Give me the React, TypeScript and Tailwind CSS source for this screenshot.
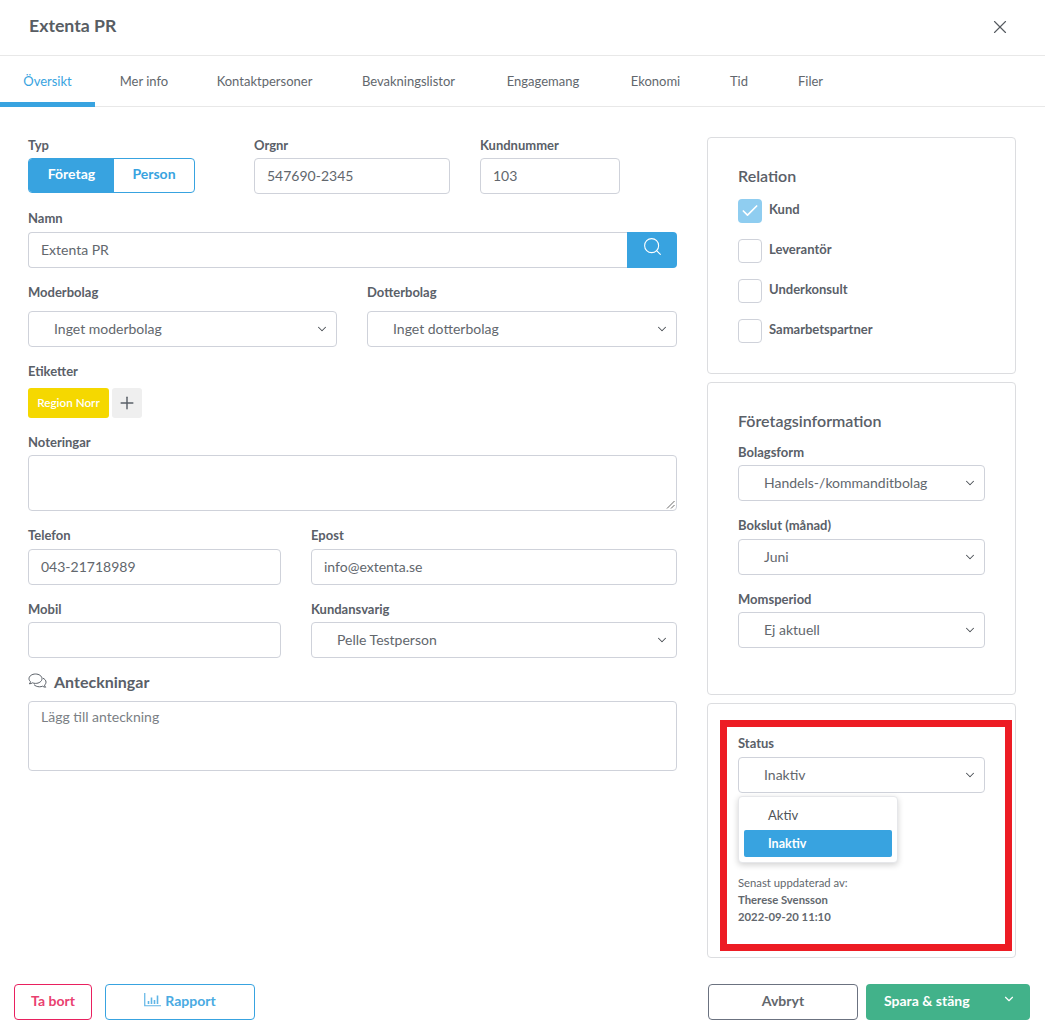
import React from "react";
import { X, Search, ChevronDown, Check, Plus } from "lucide-react";

const tabs = [
  ["Översikt", "w-[95px]"],
  ["Mer info", "w-[98px]"],
  ["Kontaktpersoner", "w-[143px]"],
  ["Bevakningslistor", "w-[145px]"],
  ["Engagemang", "w-[124px]"],
  ["Ekonomi", "w-[101px]"],
  ["Tid", "w-[66px]"],
  ["Filer", "w-[77px]"],
];

function Label({ children, className = "" }: { children: React.ReactNode; className?: string }) {
  return <div className={`text-[13px] leading-4 font-bold text-[#5a6068] ${className}`}>{children}</div>;
}

function Input({ value, className = "" }: { value?: string; className?: string }) {
  return (
    <div className={`h-[36px] border border-[#cfd2da] rounded-[4px] px-3 pb-[1px] flex items-center text-[14px] text-[#62676d] ${className}`}>
      {value}
    </div>
  );
}

function Select({ value, className = "" }: { value: string; className?: string }) {
  return (
    <div className={`h-[36px] border border-[#cfd2da] rounded-[4px] pl-[25px] pr-[7px] pb-[1px] flex items-center justify-between text-[14px] text-[#62676d] ${className}`}>
      <span>{value}</span>
      <ChevronDown size={14} strokeWidth={1.75} className="text-[#4a4f55]" />
    </div>
  );
}

function CheckRow({ label, checked }: { label: string; checked?: boolean }) {
  return (
    <div className="flex items-start gap-[7px] h-[24px]">
      {checked ? (
        <div className="w-[24px] h-[24px] rounded-[4px] bg-[#8fcdf0] flex items-center justify-center">
          <Check size={20} strokeWidth={2} className="text-white" />
        </div>
      ) : (
        <div className="w-[24px] h-[24px] rounded-[4px] border border-[#cfd2da]" />
      )}
      <span className="text-[13px] leading-4 font-bold text-[#5a6068] pt-[2px]">{label}</span>
    </div>
  );
}

function CommentsIcon() {
  return (
    <svg width="19" height="17" viewBox="0 0 19 17" fill="none" stroke="#5a6068" strokeWidth="1">
      <path d="M7.5 1C3.9 1 1 3.1 1 5.7c0 1.2.6 2.2 1.5 3-.1.8-.6 1.6-1.2 2.1 1.2 0 2.4-.4 3.2-1 .9.4 1.9.6 3 .6 3.6 0 6.5-2.1 6.5-4.7S11.100 1 7.500 1z" />
      <path d="M14.800 5.200c1.900.7 3.200 2.200 3.200 3.900 0 1.200-.6 2.200-1.500 3 .1.800.6 1.600 1.200 2.100-1.200 0-2.400-.4-3.200-1-.9.4-1.900.6-3 .6-2.300 0-4.300-.9-5.500-2.200" />
    </svg>
  );
}

function ChartIcon() {
  return (
    <svg width="17" height="14" viewBox="0 0 17 14" fill="none" className="mb-[1px]">
      <path d="M.75 0v12.750H17" stroke="#5fb5e6" strokeWidth="1.200" />
      <path d="M4.500 8v3M7.500 4.500V11M10.500 7v4M13.500 2.500V11" stroke="#5fb5e6" strokeWidth="1.600" />
    </svg>
  );
}

export default function App() {
  return (
    <div className="relative w-[1045px] h-[1034px] bg-white flex flex-col overflow-hidden font-['Lato','Open_Sans',sans-serif]">
      <header className="h-[56px] shrink-0 border-b border-[#e8e8e8] pl-[29px] pr-[34px] pb-[2px] flex items-center justify-between">
        <h1 className="text-[17.700px] font-bold text-[#585d63]">Extenta PR</h1>
        <X size={22} strokeWidth={1.25} className="text-[#555a60]" />
      </header>

      <nav className="h-[51px] shrink-0 border-b border-[#e8e8e8] flex">
        {tabs.map(([t, w], i) => (
          <div
            key={t}
            className={`${w} h-[51px] flex justify-center pt-[17px] text-[13px] leading-4 ${
              i === 0 ? "text-[#38a3e0] border-b-[5px] border-[#38a3e0]" : "text-[#62676d]"
            }`}
          >
            {t}
          </div>
        ))}
      </nav>

      <main className="flex-1 flex pl-[28px] pr-[29px] pt-[30px] gap-[30px]">
        <div className="w-[649px]">
          <div className="flex">
            <div className="w-[226px]">
              <Label className="mb-[5px]">Typ</Label>
              <div className="flex w-[167px] h-[35px] rounded-[4px] border border-[#38a3e0] overflow-hidden text-[14px] font-bold">
                <div className="w-[85px] bg-[#38a3e0] text-white flex items-center justify-center pb-[4px]">Företag</div>
                <div className="flex-1 text-[#38a3e0] flex items-center justify-center pb-[4px]">Person</div>
              </div>
            </div>
            <div className="w-[226px]">
              <Label className="mb-[5px]">Orgnr</Label>
              <Input value="547690-2345" className="w-[196px]" />
            </div>
            <div>
              <Label className="mb-[5px]">Kundnummer</Label>
              <Input value="103" className="w-[140px]" />
            </div>
          </div>

          <Label className="mt-[16px] mb-[6px]">Namn</Label>
          <div className="flex h-[36px]">
            <Input value="Extenta PR" className="flex-1 rounded-r-none border-r-0" />
            <div className="w-[50px] bg-[#38a3e0] rounded-r-[4px] flex items-start justify-center pt-[4px]">
              <Search size={21} strokeWidth={1.25} className="text-white" />
            </div>
          </div>

          <div className="flex gap-[30px] mt-[16px]">
            <div className="w-[309px]">
              <Label className="mb-[11px]">Moderbolag</Label>
              <Select value="Inget moderbolag" />
            </div>
            <div className="w-[310px]">
              <Label className="mb-[11px]">Dotterbolag</Label>
              <Select value="Inget dotterbolag" />
            </div>
          </div>

          <Label className="mt-[16px] mb-[9px]">Etiketter</Label>
          <div className="flex gap-[3px] h-[30px]">
            <div className="w-[81px] bg-[#f5d800] rounded-[3px] text-white text-[11.700px] font-semibold flex items-center justify-center">Region Norr</div>
            <div className="w-[30px] bg-[#efefef] rounded-[3px] flex items-center justify-center">
              <Plus size={20} strokeWidth={1.75} className="text-[#5a6068]" />
            </div>
          </div>

          <Label className="mt-[16px] mb-[5px]">Noteringar</Label>
          <div className="relative h-[56px] border border-[#cfd2da] rounded-[4px]">
            <svg width="9" height="9" viewBox="0 0 9 9" className="absolute right-[1px] bottom-[1px]" stroke="#6b6b6b" strokeWidth="1">
              <path d="M8.500 1 1 8.500M8.500 5 5 8.500" />
            </svg>
          </div>

          <div className="flex gap-[30px] mt-[16px]">
            <div className="w-[253px]">
              <Label className="mb-[6px]">Telefon</Label>
              <Input value="043-21718989" />
            </div>
            <div className="w-[366px]">
              <Label className="mb-[6px]">Epost</Label>
              <Input value="info@extenta.se" />
            </div>
          </div>

          <div className="flex gap-[30px] mt-[16px]">
            <div className="w-[253px]">
              <Label className="mb-[5px]">Mobil</Label>
              <Input />
            </div>
            <div className="w-[366px]">
              <Label className="mb-[5px]">Kundansvarig</Label>
              <Select value="Pelle Testperson" />
            </div>
          </div>

          <div className="flex items-center gap-[7px] mt-[13px] mb-[9px] h-[21px]">
            <CommentsIcon />
            <span className="text-[16px] font-bold text-[#5a6068]">Anteckningar</span>
          </div>
          <div className="h-[70px] border border-[#cfd2da] rounded-[4px] px-3 pt-[5px] text-[14px] leading-5 text-[#7b7f85]">
            Lägg till anteckning
          </div>
        </div>

        <aside className="w-[309px] flex flex-col gap-[8px]">
          <section className="h-[237px] border border-[#dcdde0] rounded-[4px] px-[30px] pt-[27px]">
            <h2 className="text-[16px] leading-[22px] font-semibold text-[#5a6068] mb-[12px]">Relation</h2>
            <div className="flex flex-col gap-[16px]">
              <CheckRow label="Kund" checked />
              <CheckRow label="Leverantör" />
              <CheckRow label="Underkonsult" />
              <CheckRow label="Samarbetspartner" />
            </div>
          </section>

          <section className="h-[313px] border border-[#dcdde0] rounded-[4px] px-[30px] pt-[27px]">
            <h2 className="text-[16px] leading-[22px] font-semibold text-[#5a6068] mb-[12px]">Företagsinformation</h2>
            <Label className="mb-[5px]">Bolagsform</Label>
            <Select value="Handels-/kommanditbolag" />
            <Label className="mt-[16px] mb-[6px]">Bokslut (månad)</Label>
            <Select value="Juni" />
            <Label className="mt-[16px] mb-[5px]">Momsperiod</Label>
            <Select value="Ej aktuell" />
          </section>

          <section className="relative h-[255px] border border-[#dcdde0] rounded-[4px] px-[30px] pt-[31px]">
            <Label className="mb-[6px]">Status</Label>
            <Select value="Inaktiv" />
            <div className="mt-[81px] text-[11.300px] leading-[17px] text-[#62676d]">
              <div>Senast uppdaterad av:</div>
              <div className="font-bold">Therese Svensson</div>
              <div className="font-bold">2022-09-20 11:10</div>
            </div>

            <div className="absolute left-[30px] top-[92px] w-[160px] h-[67px] bg-white border border-[#e6e7ea] rounded-[4px] shadow-[0_2px_6px_rgba(0,0,0,0.18)] px-[5px] pt-[5px] text-[13px]">
              <div className="h-[27px] pl-[24px] pt-[1px] flex items-center text-[#4f5459]">Aktiv</div>
              <div className="h-[27px] mt-[1px] pl-[24px] pt-[1px] flex items-center bg-[#38a3e0] rounded-[2px] text-white font-bold text-[12.500px]">Inaktiv</div>
            </div>

            <div className="absolute left-[12px] top-[16px] w-[292px] h-[231px] border-[7px] border-[#ed1c24] pointer-events-none" />
          </section>
        </aside>
      </main>

      <footer className="h-[50px] shrink-0 pl-[14px] pr-[15px] flex text-[14px] font-bold">
        <div className="w-[78px] h-[36px] pb-[4px] border border-[#e9205f] rounded-[4px] text-[#e9406f] flex items-center justify-center">Ta bort</div>
        <div className="w-[150px] h-[36px] pb-[4px] ml-[13px] border border-[#38a3e0] rounded-[4px] text-[#4aaae2] flex items-center justify-center gap-[4px]">
          <ChartIcon />
          Rapport
        </div>
        <div className="w-[150px] h-[36px] pb-[4px] ml-auto border border-[#6b7280] rounded-[4px] text-[#62676d] flex items-center justify-center">Avbryt</div>
        <div className="relative w-[164px] h-[36px] pb-[4px] ml-[8px] bg-[#42b28a] rounded-[4px] text-white flex items-center pl-[18px]">
          Spara &amp; stäng
          <ChevronDown size={14} strokeWidth={2} className="absolute right-[14px] top-[8px]" />
        </div>
      </footer>
    </div>
  );
}
